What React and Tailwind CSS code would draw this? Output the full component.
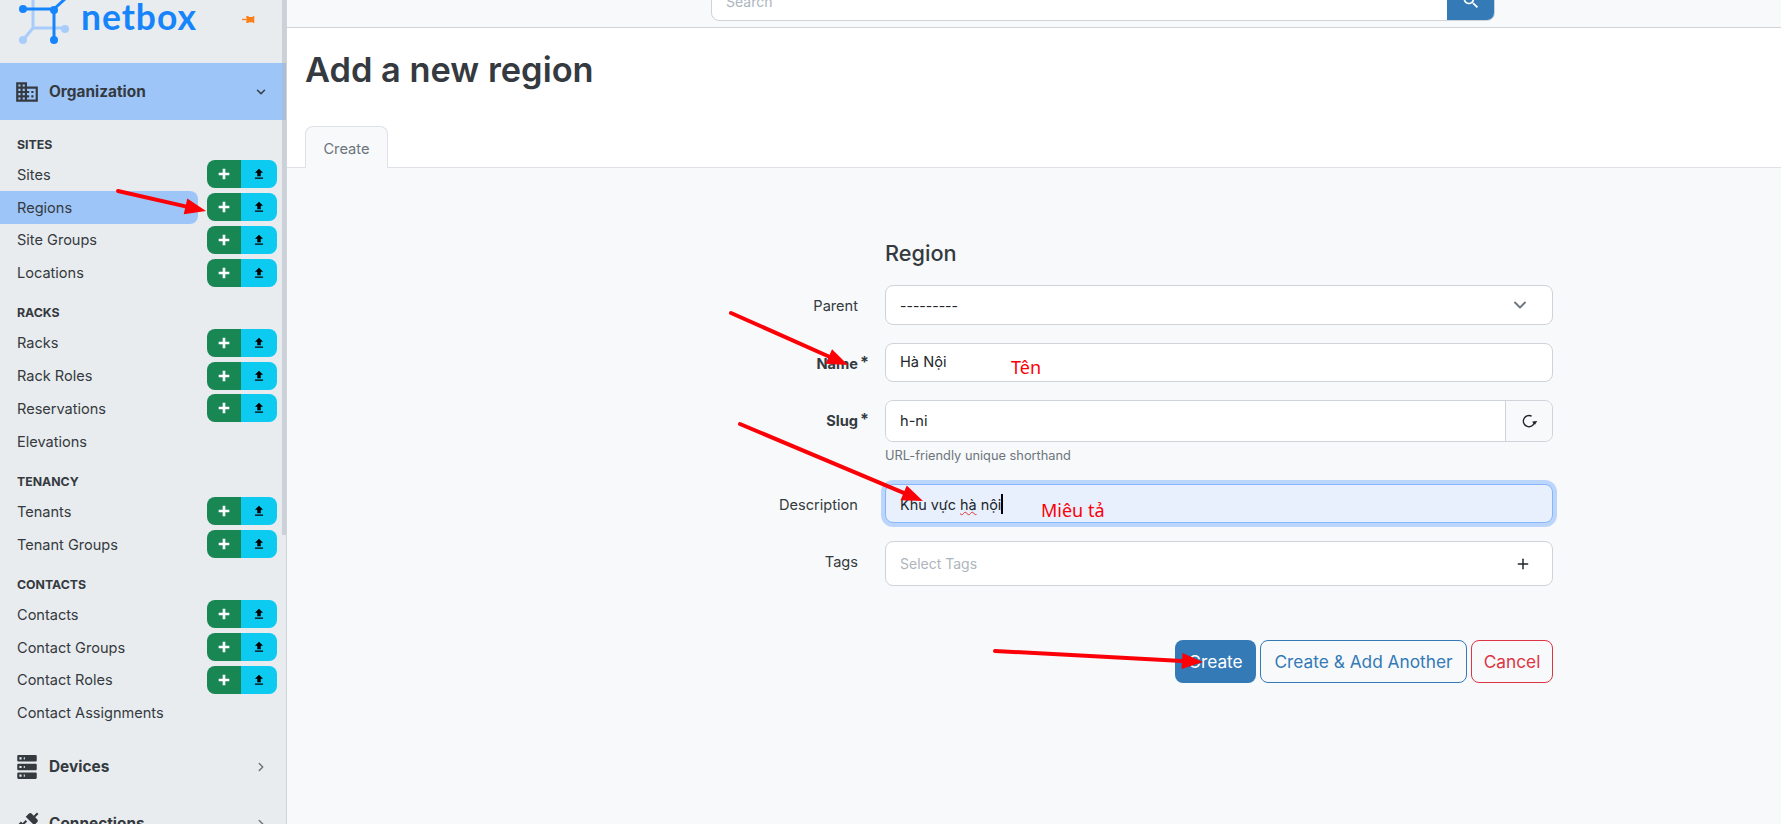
import { ChevronDown, ChevronRight, Plus } from 'lucide-react'

const icons = {
    domain: "M18,15H16V17H18M18,11H16V13H18M20,19H12V17H14V15H12V13H14V11H12V9H20M10,7H8V5H10M10,11H8V9H10M10,15H8V13H10M10,19H8V17H10M6,7H4V5H6M6,11H4V9H6M6,15H4V13H6M6,19H4V17H6M12,7V3H2V21H22V7H12Z",
    server: "M4,1H20A1,1 0 0,1 21,2V6A1,1 0 0,1 20,7H4A1,1 0 0,1 3,6V2A1,1 0 0,1 4,1M4,9H20A1,1 0 0,1 21,10V14A1,1 0 0,1 20,15H4A1,1 0 0,1 3,14V10A1,1 0 0,1 4,9M4,17H20A1,1 0 0,1 21,18V22A1,1 0 0,1 20,23H4A1,1 0 0,1 3,22V18A1,1 0 0,1 4,17M9,5H10V3H9V5M9,13H10V11H9V13M9,21H10V19H9V21M5,3V5H7V3H5M5,11V13H7V11H5M5,19V21H7V19H5Z",
    plus: "M20 14H14V20H10V14H4V10H10V4H14V10H20V14Z",
    upload: "M9,16V10H5L12,3L19,10H15V16H9M5,20V18H19V20H5Z",
    connection: "M21.4 7.5C22.2 8.3 22.2 9.6 21.4 10.3L18.6 13.1L10.8 5.3L13.6 2.5C14.4 1.7 15.7 1.7 16.4 2.5L18.2 4.3L21.2 1.3L22.6 2.7L19.6 5.7L21.4 7.5M15.6 13.3L14.2 11.9L11.4 14.7L9.3 12.6L12.1 9.8L10.7 8.4L7.9 11.2L6.4 9.8L3.6 12.6C2.8 13.4 2.8 14.7 3.6 15.4L5.4 17.2L1.4 21.2L2.8 22.6L6.8 18.6L8.6 20.4C9.4 21.2 10.7 21.2 11.4 20.4L14.2 17.6L12.8 16.2L15.6 13.3Z",
    magnify: "M9.5,3A6.5,6.5 0 0,1 16,9.5C16,11.11 15.41,12.59 14.44,13.73L14.71,14H15.5L20.5,19L19,20.5L14,15.5V14.71L13.73,14.44C12.59,15.41 11.11,16 9.5,16A6.5,6.5 0 0,1 3,9.5A6.5,6.5 0 0,1 9.5,3M9.5,5C7,5 5,7 5,9.5C5,12 7,14 9.5,14C12,14 14,12 14,9.5C14,7 12,5 9.5,5Z",
}

const Icon = ({ name, className }) => (
    <svg viewBox="0 0 24 24" fill="currentColor" className={className}>
        <path d={icons[name]} />
    </svg>
)

const sections = [
    { title: "SITES", rows: [["Sites", true], ["Regions", true, true], ["Site Groups", true], ["Locations", true]] },
    { title: "RACKS", rows: [["Racks", true], ["Rack Roles", true], ["Reservations", true], ["Elevations", false]] },
    { title: "TENANCY", rows: [["Tenants", true], ["Tenant Groups", true]] },
    { title: "CONTACTS", rows: [["Contacts", true], ["Contact Groups", true], ["Contact Roles", true], ["Contact Assignments", false]] },
]

const Logo = () => (
    <svg viewBox="0 0 72 48" className="w-[72px] h-[48px] shrink-0">
        <g stroke="#a8cdfb" strokeWidth="3" fill="#a8cdfb">
            <path d="M33 0V28H65M33 28L23 40" fill="none" />
            <circle cx="65" cy="29" r="4" stroke="none" />
            <circle cx="23" cy="40" r="4" stroke="none" />
        </g>
        <g stroke="#1685fc" strokeWidth="3" fill="#1685fc">
            <path d="M23 9H54V40M54 9L66 -2" fill="none" />
            <circle cx="23" cy="9" r="4" stroke="none" />
            <circle cx="54" cy="10" r="4" stroke="none" />
            <circle cx="54" cy="40" r="4" stroke="none" />
        </g>
    </svg>
)

const Sidebar = () => (
    <aside className="w-[287px] shrink-0 h-full overflow-hidden bg-[#e9ecef] border-r border-[#ced4da] text-[#343a40] relative">
        <div className="h-[63px] overflow-hidden flex items-start w-full pr-[30px]">
            <Logo />
            <span className="flex-1 ml-[9px] text-[35.4px] leading-[33px] font-bold text-[#1685fc] tracking-[1px] font-['Lato',sans-serif]">netbox</span>
            <svg viewBox="0 0 16 10" className="w-[14px] h-[9px] mt-[15px]">
                <path d="M0 5H5" stroke="#fd7e14" strokeWidth="1.5" />
                <path d="M5 1H7L8 2H12L13 1H14V9H13L12 8H8L7 9H5Z" fill="#fd7e14" />
            </svg>
        </div>

        <div className="h-[57px] bg-[#9ec5f8] flex items-center pl-[14px] pr-[18px]">
            <Icon name="domain" className="w-[26px] h-[26px] mr-[9px]" />
            <span className="text-[15.4px] font-bold flex-1">Organization</span>
            <ChevronDown size={14} strokeWidth={2.5} />
        </div>

        <div className="pt-[10px]">
            {sections.map((s) => (
                <div key={s.title} className="mb-[9.5px]">
                    <div className="h-[28px] flex items-center pl-[17px] pt-[2px] text-[12.3px] font-bold">{s.title}</div>
                    {s.rows.map(([label, hasButtons, active]) => (
                        <div key={label} className="h-[32.75px] flex items-center pr-[9px]">
                            <div className={`w-[198px] h-full flex items-center pl-[17px] pt-[3px] text-[14.55px] rounded-r-lg whitespace-nowrap ${active ? "bg-[#9ec5f8]" : ""}`}>
                                {label}
                            </div>
                            {hasButtons && (
                                <div className="ml-[9px] flex h-[28px] w-[70px] rounded-lg overflow-hidden">
                                    <div className="w-[34px] bg-[#198754] text-white flex items-center justify-center">
                                        <Icon name="plus" className="w-[16px] h-[16px]" />
                                    </div>
                                    <div className="w-[36px] bg-[#0dcaf0] text-black flex items-center justify-center">
                                        <Icon name="upload" className="w-[14px] h-[14px]" />
                                    </div>
                                </div>
                            )}
                        </div>
                    ))}
                </div>
            ))}
        </div>

        {["Devices", "Connections"].map((label) => (
            <div key={label} className="h-[57px] flex items-center pl-[14px] pr-[18px]">
                <Icon name={label === "Devices" ? "server" : "connection"} className="w-[26px] h-[26px] mr-[9px]" />
                <span className="text-[15.4px] font-bold flex-1">{label}</span>
                <ChevronRight size={14} strokeWidth={2.5} className="text-[#6c757d]" />
            </div>
        ))}

        {/* scrollbar thumb */}
        <div className="absolute top-0 right-0 w-[4px] h-[535px] bg-[#adb5bd]/50" />
    </aside>
)

const inputClass = "w-full border border-[#ced4da] rounded-lg bg-white text-[14.6px] text-[#212529] px-[14px] flex items-center"

const Label = ({ children, bold, required, pt = "pt-0" }) => (
    <div className={`w-[200px] text-right text-[14.6px] text-[#343a40] ${pt} ${bold ? "font-bold" : ""}`}>
        <span className="relative">
            {children}
            {required && <span className="absolute left-full top-[-5px] ml-[2px] text-[16px] font-bold">*</span>}
        </span>
    </div>
)

const FormRow = ({ label, bold, required, pt, children, className = "mb-[18px]" }) => (
    <div className={`flex gap-[27px] ${className}`}>
        <Label bold={bold} required={required} pt={pt}>{label}</Label>
        <div className="w-[668px]">{children}</div>
    </div>
)

const Form = () => (
    <div className="ml-[371px] pt-[71px]">
        <div className="ml-[227px] h-[28px] mb-[18px] text-[21.7px] leading-[28px] font-medium text-[#343a40]">Region</div>

        <FormRow label="Parent" pt="pt-[11px]">
            <div className={`${inputClass} h-[40px] justify-between pr-[22px] text-[14px]`}>
                <span className="text-[14px]">---------</span>
                <ChevronDown size={20} strokeWidth={2.2} className="text-[#6c757d]" />
            </div>
        </FormRow>

        <FormRow label="Name" bold required pt="pt-[11px]">
            <div className={`${inputClass} h-[39px]`}><span className="mt-[1px]">Hà Nội</span></div>
        </FormRow>

        <FormRow label="Slug" bold required pt="pt-[11px]" className="mb-0">
            <div className="flex h-[42px] border border-[#ced4da] rounded-lg overflow-hidden">
                <div className="flex-1 bg-white text-[14.6px] text-[#212529] px-[14px] flex items-center"><span className="mt-[1px]">h-ni</span></div>
                <div className="w-[47px] border-l border-[#ced4da] bg-[#f8f9fa] flex items-center justify-center text-[#212529]">
                    <svg viewBox="0 0 24 24" className="w-[18px] h-[18px]" fill="none" stroke="currentColor" strokeWidth="1.8">
                        <path d="M19.5 12.5A7.5 7.5 0 1 1 15.5 5.5" />
                        <path d="M16 13L20 17L23 12Z" fill="currentColor" stroke="none" />
                    </svg>
                </div>
            </div>
            <div className="h-[24px] text-[12.8px] text-[#6c757d] leading-[27px] mb-[18px]">URL-friendly unique shorthand</div>
        </FormRow>

        <FormRow label="Description" pt="pt-[11px]">
            <div className="h-[39px] w-full border border-[#86b7fe] rounded-lg bg-[#e8f0fe] shadow-[0_0_0_4px_#bcd6fb] text-[14.4px] text-[#212529] pl-[14px] flex items-center whitespace-pre">
                <span className="mt-[2px]">Khu vực <span className="underline decoration-wavy decoration-[#e03131] decoration-1">hà</span> nội</span>
                <span className="w-[2px] h-[20px] bg-black" />
            </div>
        </FormRow>

        <FormRow label="Tags" pt="pt-[11px]" className="mb-[54px]">
            <div className={`${inputClass} h-[45px] justify-between pr-[21px]`}>
                <span className="text-[#adb5bd] text-[14px]">Select Tags</span>
                <Plus size={16} strokeWidth={2.2} className="text-[#212529]" />
            </div>
        </FormRow>

        <div className="w-[895px] flex justify-end gap-[4px] text-[17.3px]">
            <button className="w-[81px] h-[43px] rounded-lg bg-[#337ab7] text-white">Create</button>
            <button className="w-[207px] h-[43px] rounded-lg border border-[#337ab7] text-[#337ab7] whitespace-nowrap">Create &amp; Add Another</button>
            <button className="w-[82px] h-[43px] rounded-lg border border-[#dc3545] text-[#dc3545]">Cancel</button>
        </div>
    </div>
)

const Arrow = ({ x1, y1, x2, y2, head = 21, wide = 8, w = 4 }) => {
    const len = Math.hypot(x2 - x1, y2 - y1)
    const ux = (x2 - x1) / len
    const uy = (y2 - y1) / len
    const bx = x2 - ux * head
    const by = y2 - uy * head
    const pts = `${x2},${y2} ${bx - uy * wide},${by + ux * wide} ${bx + uy * wide},${by - ux * wide}`
    return (
        <g>
            <line x1={x1} y1={y1} x2={bx} y2={by} stroke="#fb0007" strokeWidth={w} strokeLinecap="round" />
            <polygon points={pts} fill="#fb0007" />
        </g>
    )
}

const App = () => (
    <div className="relative w-[1781px] h-[824px] overflow-hidden flex bg-[#f8f9fa] font-['Inter',sans-serif]">
        <Sidebar />
        <main className="flex-1 min-w-0 flex flex-col">
            <div className="h-[28px] overflow-hidden border-b border-[#ced4da] shrink-0">
                <div className="ml-[424px] w-[784px] h-[40px] -mt-[19px] flex border border-[#ced4da] rounded-lg overflow-hidden bg-white">
                    <div className="flex-1 pl-[14px] flex items-center text-[14px] text-[#adb5bd]">Search</div>
                    <div className="w-[47px] bg-[#337ab7] text-white flex items-center justify-center">
                        <Icon name="magnify" className="w-[20px] h-[20px]" />
                    </div>
                </div>
            </div>
            <div className="h-[140px] bg-white border-b border-[#dee2e6] shrink-0 flex flex-col justify-between">
                <h1 className="pl-[18px] pt-[20px] text-[34.4px] leading-[44px] font-semibold text-[#343a40]">Add a new region</h1>
                <div className="pl-[18px] -mb-px">
                    <div className="w-[83px] h-[42px] pt-[3px] border border-[#dee2e6] border-b-0 rounded-t-lg bg-[#f8f9fa] flex items-center justify-center text-[14.7px] text-[#6c757d]">Create</div>
                </div>
            </div>
            <Form />
        </main>

        {/* screenshot annotations */}
        <svg viewBox="0 0 1781 824" className="absolute inset-0 w-[1781px] h-[824px] pointer-events-none">
            <Arrow x1={118} y1={191} x2={206} y2={211} />
            <Arrow x1={731} y1={313} x2={848} y2={365} />
            <Arrow x1={740} y1={424} x2={923} y2={501} />
            <Arrow x1={995} y1={651} x2={1203} y2={662} />
        </svg>
        <span className="absolute left-[1011px] top-[354px] text-[18px] leading-[26px] text-[#fb0007] font-['Noto_Sans',sans-serif]">Tên</span>
        <span className="absolute left-[1041px] top-[497px] text-[18px] leading-[26px] text-[#fb0007] font-['Noto_Sans',sans-serif]">Miêu tả</span>
    </div>
)

export default App
